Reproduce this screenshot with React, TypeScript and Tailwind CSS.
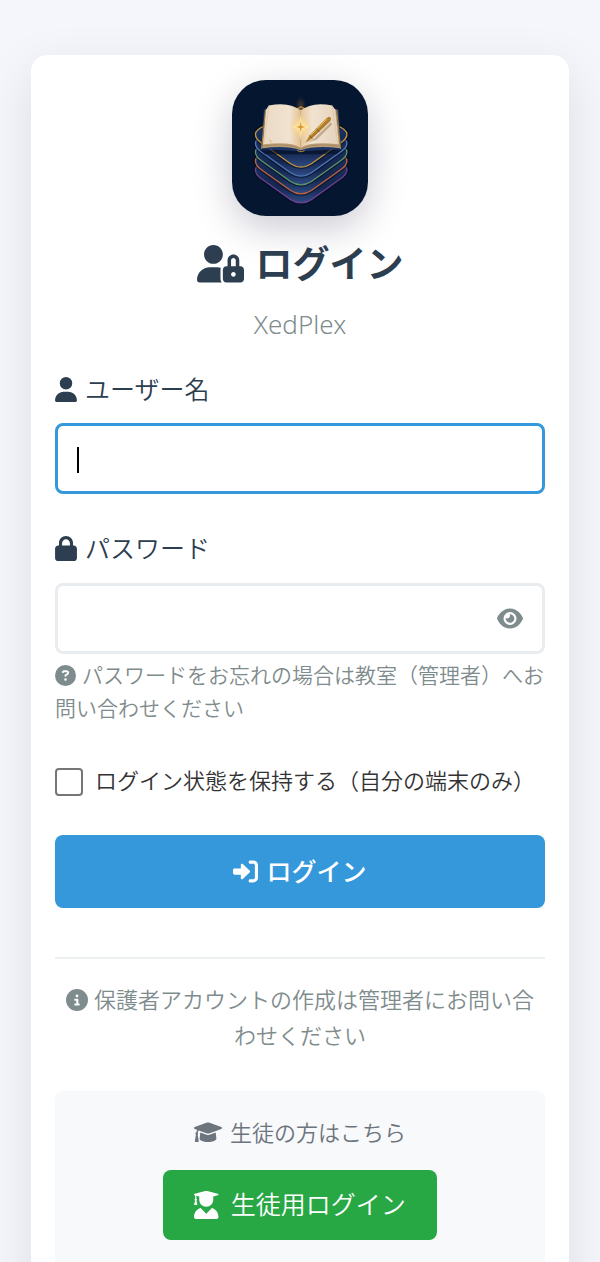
import { useState } from 'react';
import { FaCircleInfo, FaCircleQuestion, FaEye, FaLock, FaUser } from 'react-icons/fa6';

// bottom sheet first, so the upper ones overlap it
const sheets = [
  { dy: 107, color: '#6b3f8f' },
  { dy: 80, color: '#c0623c' },
  { dy: 53, color: '#5f9468' },
  { dy: 27, color: '#4f77b8' },
  { dy: 0, color: '#c0923f' },
];

const sheetPath =
  'M135 167Q107 178 107 192Q107 206 125 218L212 280Q243 300 274 280L361 218Q380 206 380 192Q380 178 352 167L243 110Z';

function Logo() {
  return (
    <svg
      viewBox="37 30 406 406"
      role="img"
      aria-label="XedPlex"
      className="w-[136px] h-[136px] rounded-[34px] shadow-[0_12px_38px_rgba(20,10,50,0.22)]"
    >
      <defs>
        <linearGradient id="sheet" x1="0" y1="0" x2="0" y2="1">
          <stop offset="0.4" stopColor="#1a2f5c" />
          <stop offset="0.75" stopColor="#14264f" />
          <stop offset="1" stopColor="#2f4c84" />
        </linearGradient>
        <linearGradient id="pageLeft" x1="0" y1="0" x2="1" y2="0">
          <stop offset="0" stopColor="#ead9c3" />
          <stop offset="0.7" stopColor="#f1e3d1" />
          <stop offset="1" stopColor="#e3c293" />
        </linearGradient>
        <linearGradient id="pageRight" x1="0" y1="0" x2="1" y2="0">
          <stop offset="0" stopColor="#e6c799" />
          <stop offset="0.3" stopColor="#f1e3d1" />
          <stop offset="1" stopColor="#e5d2ba" />
        </linearGradient>
        <linearGradient id="pen" x1="0" y1="0" x2="1" y2="1">
          <stop offset="0.2" stopColor="#d9a640" />
          <stop offset="0.8" stopColor="#8a5a14" />
        </linearGradient>
        <radialGradient id="glow">
          <stop offset="0" stopColor="#fff3c0" />
          <stop offset="0.4" stopColor="#ffdf95" stopOpacity="0.7" />
          <stop offset="1" stopColor="#ffd27a" stopOpacity="0" />
        </radialGradient>
        <radialGradient id="halo">
          <stop offset="0" stopColor="#b06f35" stopOpacity="0.4" />
          <stop offset="1" stopColor="#b06f35" stopOpacity="0" />
        </radialGradient>
      </defs>
      <rect x="37" y="30" width="406" height="406" fill="#051630" />
      {sheets.map((sheet) => (
        <g key={sheet.dy} transform={`translate(0 ${sheet.dy})`}>
          <path d={sheetPath} fill="none" stroke="#020b1d" strokeOpacity="0.5" strokeWidth="12" />
          <path d={sheetPath} fill="url(#sheet)" stroke={sheet.color} strokeWidth="4" />
        </g>
      ))}
      <ellipse cx="242" cy="106" rx="16" ry="26" fill="url(#halo)" />
      {/* cover */}
      <path d="M120 238L362 238L350 252L135 252Z" fill="#030d22" opacity="0.6" />
      <path d="M132 119L142 116L242 130L345 116L355 119L363 237L254 242Q243 248 232 242L124 237Z" fill="#1b3566" />
      <path d="M137 119L125 236M350 119L361 236" stroke="#b1802f" strokeWidth="3" fill="none" />
      <path d="M232 240Q243 248 254 240" stroke="#b1802f" strokeWidth="3" fill="none" />
      {/* page edges */}
      <path d="M138 118L127 234Q200 224 242 240Q286 224 360 234L348 118Z" fill="#bb9d75" />
      <path d="M130 227Q205 217 242 236Q282 217 357 227" stroke="#8d7554" strokeWidth="1.5" fill="none" />
      {/* pages */}
      <path d="M139 118L147 106Q212 94 242 122L242 232Q213 212 130 222Z" fill="url(#pageLeft)" />
      <path d="M345 118L336 106Q274 94 242 122L242 232Q273 212 356 222Z" fill="url(#pageRight)" />
      <path d="M147 106L132 220M336 106L353 220" stroke="#d3bb98" strokeWidth="1.5" fill="none" />
      <path d="M242 122V232" stroke="#c39a64" strokeWidth="1.5" />
      <path d="M149 208l3 5l4 2" stroke="#cda15a" strokeWidth="2" fill="none" />
      <circle cx="242" cy="170" r="34" fill="url(#glow)" />
      <path d="M242 128L245 165L268 170L245 175L242 214L239 175L217 170L239 165Z" fill="#fff0b3" opacity="0.8" />
      <path d="M242 154L245 167L257 170L245 173L242 186L239 173L228 170L239 167Z" fill="#dc9830" />
      {/* pen */}
      <path d="M262 216L284 203L332 156L336 162L290 208Z" fill="#8e6c46" opacity="0.45" />
      <path d="M256 217L268 196L318 145Q326 137 331 142Q335 148 328 155L277 204Z" fill="url(#pen)" />
      <path d="M272 195L320 147" stroke="#f3cd74" strokeWidth="2" />
      <path d="M268 196L277 204M289 175L298 185" stroke="#704711" strokeWidth="2" />
    </svg>
  );
}

function UserLockIcon() {
  return (
    <svg viewBox="0 0 640 512" fill="currentColor" aria-hidden="true" className="w-[47px]">
      <path d="M224 256c70.7 0 128-57.3 128-128S294.7 0 224 0S96 57.3 96 128S153.3 256 224 256zM320 336c0-8.7 1.7-16.9 4.3-24.7C308.6 306.6 291.9 304 274.7 304H173.3C77.6 304 0 381.7 0 477.3C0 496.5 15.5 512 34.7 512h301.7C326.3 498.6 320 482.1 320 464V336z" />
      <path
        fillRule="evenodd"
        d="M592 288H576V208c0-44-36-80-80-80s-80 36-80 80V288h-16C373.6 288 352 309.6 352 336v128c0 26.4 21.6 48 48 48h192c26.4 0 48-21.6 48-48v-128C640 309.6 618.4 288 592 288zM496 432c-17.6 0-32-14.4-32-32s14.4-32 32-32s32 14.4 32 32S513.6 432 496 432zM528 288h-64V208c0-17.6 14.4-32 32-32s32 14.4 32 32V288z"
      />
    </svg>
  );
}

function SignInIcon() {
  return (
    <svg viewBox="0 0 512 512" fill="currentColor" aria-hidden="true" className="w-[25px]">
      <path d="M344.7 238.5l-144.1-136C193.7 95.9 183.4 94.1 174.6 97.9C165.8 101.8 160.1 110.4 160.1 120V192H32C14.3 192 0 206.3 0 224v64c0 17.7 14.3 32 32 32h128.1v72c0 9.6 5.7 18.2 14.5 22c8.8 3.8 19 2 26-4.6l144.1-136C354.3 264.4 354.3 247.6 344.7 238.5zM416 32h-64c-17.7 0-32 14.3-32 32s14.3 32 32 32h64c17.7 0 32 14.3 32 32v256c0 17.7-14.3 32-32 32h-64c-17.7 0-32 14.3-32 32s14.3 32 32 32h64c53 0 96-43 96-96V128C512 75 469 32 416 32z" />
    </svg>
  );
}

function GraduationCapIcon() {
  return (
    <svg viewBox="0 0 640 512" fill="currentColor" aria-hidden="true" className="w-7">
      <path d="M624 136.9L341.7 35.7c-13.7-4.9-29.7-4.9-43.4 0L16 136.9C6.4 140.4 0 149.6 0 160s6.4 19.6 16 23.1L76.1 204.6c-11.9 15.8-20.3 34.2-24.6 53.9C40 263.4 32 274.8 32 288c0 10 4.8 18.5 11.9 24.4l-24.8 149C17.5 471.1 25 480 34.9 480H93.1c9.9 0 17.4-8.9 15.8-18.6l-24.8-149C91.2 306.5 96 298 96 288c0-10.3-5.2-19-12.7-24.9c4.3-17.8 12.9-33.8 24.9-47l190.1 68.2c13.7 4.9 29.7 4.9 43.4 0L624 183.1C633.6 179.6 640 170.4 640 160S633.6 140.4 624 136.9zM352 314.4C341.7 318.1 330.9 320 320 320c-10.9 0-21.7-1.9-32-5.6L142.8 262.5L128 405.3C128 446.6 213.1 480 320 480c105.1 0 192-33.4 192-74.7l-14.8-142.9L352 314.4z" />
    </svg>
  );
}

function GraduateIcon() {
  return (
    <svg viewBox="32 0 448 512" fill="currentColor" aria-hidden="true" className="h-7">
      <path d="M45.6 79.8L52 81.3v58.5C45 143.9 40 151.3 40 160c0 8.4 4.6 15.4 11.1 19.8L35.5 242C33.8 248.9 37.6 256 43.1 256h41.8c5.5 0 9.4-7.1 7.6-14L76.9 179.8C83.4 175.4 88 168.4 88 160c0-8.8-5-16.1-12-20.2V87.1L128 99.6V160c0 70.8 57.3 128 128 128s128-57.3 128-128V99.6l82.3-19.9c18.2-4.4 18.2-27 0-31.5l-190.4-46c-13-3-26.6-3-39.6 0l-190.6 46C27.5 52.6 27.5 75.4 45.6 79.8zM359.2 312.8L256 416L152.8 312.8C82.9 335.1 32 400 32 477.3C32 496.5 47.5 512 66.7 512h378.7C464.5 512 480 496.5 480 477.3C480 400 429.1 335.1 359.2 312.8z" />
    </svg>
  );
}

export default function App() {
  const [username, setUsername] = useState('');
  const [focused, setFocused] = useState(true);
  const [showPassword, setShowPassword] = useState(false);

  return (
    <div className="h-screen overflow-hidden bg-[#f4f6fb] px-[31px] pt-[55px] font-['Noto_Sans','Noto_Sans_CJK_JP',sans-serif] font-[350]">
      <main className="rounded-2xl bg-white px-6 py-[25px] shadow-[0_15px_50px_rgba(0,0,0,0.1)]">
        <header className="flex flex-col items-center">
          <Logo />
          <h1 className="mt-5 flex items-center gap-3 text-[37px] leading-[56px] font-bold text-[#2c3e50]">
            <UserLockIcon />
            ログイン
          </h1>
          <p className="mt-3 text-[26px] leading-10 text-[#7f8c8d]">XedPlex</p>
        </header>

        <form className="mt-[25px]" onSubmit={(e) => e.preventDefault()}>
          <label
            htmlFor="username"
            className="flex items-center gap-2 text-[25px] leading-10 text-[#2c3e50]"
          >
            <FaUser className="w-[22px]" />
            ユーザー名
          </label>
          <div className="relative mt-[14px]">
            <input
              id="username"
              type="text"
              autoFocus
              value={username}
              onChange={(e) => setUsername(e.target.value)}
              onFocus={() => setFocused(true)}
              onBlur={() => setFocused(false)}
              className={`block h-[71px] w-full rounded-lg border-3 border-[#e9ecef] px-[19px] text-[25px] outline-none focus:border-[#3498db] ${
                username ? 'caret-black' : 'caret-transparent'
              }`}
            />
            {focused && !username && (
              <span className="pointer-events-none absolute top-6 left-[22px] h-[26px] w-[2px] bg-black" />
            )}
          </div>

          <label
            htmlFor="password"
            className="mt-[34px] flex items-center gap-2 text-[25px] leading-10 text-[#2c3e50]"
          >
            <FaLock className="w-[22px]" />
            パスワード
          </label>
          <div className="relative mt-[15px]">
            <input
              id="password"
              type={showPassword ? 'text' : 'password'}
              className="block h-[71px] w-full rounded-lg border-3 border-[#e9ecef] pr-16 pl-[19px] text-[25px] outline-none focus:border-[#3498db]"
            />
            <button
              type="button"
              aria-label="パスワードを表示"
              onClick={() => setShowPassword(!showPassword)}
              className="absolute inset-y-0 right-[22px] flex items-center text-[25px] text-[#7f8c8d]"
            >
              <FaEye className="w-[26px]" />
            </button>
          </div>
          <p className="mt-[5px] text-[21px] leading-[33px] text-[#7f8c8d]">
            <FaCircleQuestion className="mr-[6px] inline align-[-3px]" />
            パスワードをお忘れの場合は教室（管理者）へお問い合わせください
          </p>

          <label className="mt-[37px] flex items-center gap-3 text-[22px] leading-9 text-[#333333]">
            <input
              type="checkbox"
              className="h-7 w-7 shrink-0 appearance-none rounded border-2 border-[#767676] bg-white checked:bg-[#3498db]"
            />
            <span className="pb-1 whitespace-nowrap">ログイン状態を保持する（自分の端末のみ）</span>
          </label>

          <button
            type="submit"
            className="mt-[33px] flex h-[73px] w-full items-center justify-center gap-2 rounded-lg bg-[#3498db] text-[25px] font-medium text-white"
          >
            <SignInIcon />
            ログイン
          </button>
        </form>

        <div className="mt-[49px] border-t-2 border-[#ecf0f1] pt-[22px] text-center">
          <p className="px-1 text-[22px] leading-9 text-[#7f8c8d]">
            <FaCircleInfo className="mr-[6px] inline align-[-3px]" />
            保護者アカウントの作成は管理者にお問い合わせください
          </p>
        </div>

        <section className="mt-[38px] flex flex-col items-center rounded-lg bg-[#f8f9fb] pt-[23px] pb-10">
          <p className="flex items-center gap-2 text-[22px] leading-9 text-[#6c757d]">
            <GraduationCapIcon />
            生徒の方はこちら
          </p>
          <a
            href="#student"
            className="mt-5 flex h-[70px] items-center gap-3 rounded-lg bg-[#28a745] px-[31px] text-[25px] text-white"
          >
            <GraduateIcon />
            生徒用ログイン
          </a>
        </section>
      </main>
    </div>
  );
}
